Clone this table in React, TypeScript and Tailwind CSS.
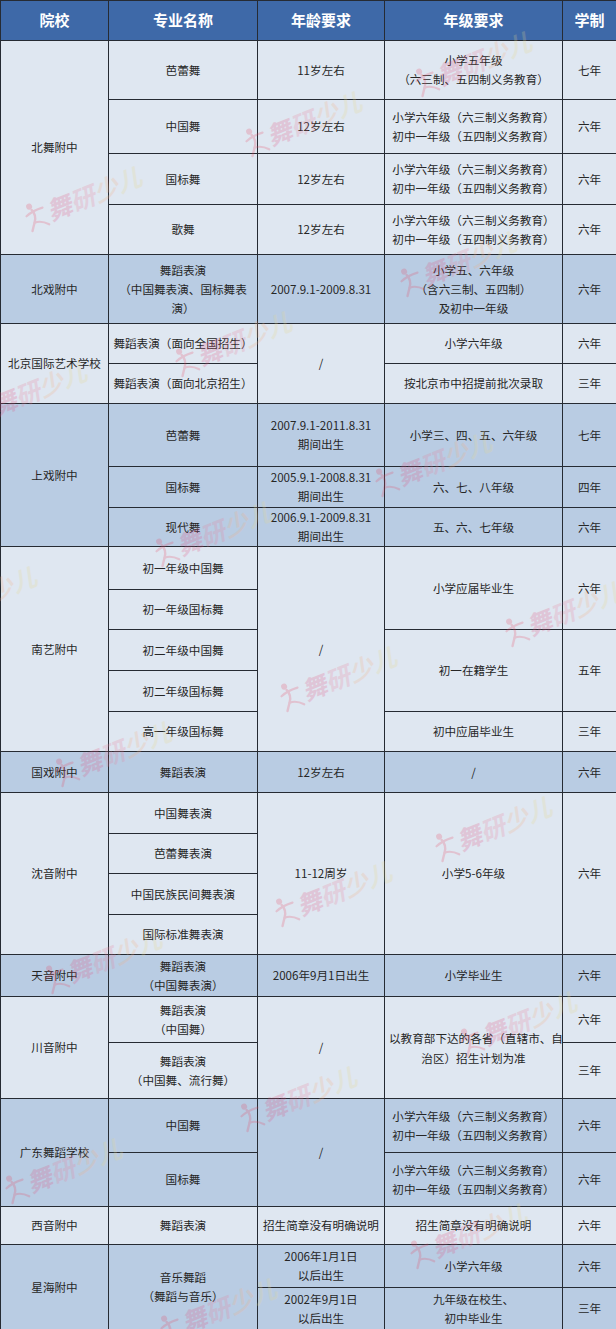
import type { ReactNode } from "react";

const LIGHT = "bg-[#dfe7f1]";
const DARK = "bg-[#b9cce3]";

function Td({
  children,
  rowSpan,
  dark,
}: {
  children?: ReactNode;
  rowSpan?: number;
  dark?: boolean;
}) {
  return (
    <td
      rowSpan={rowSpan}
      className={`border border-[#262b33] px-1 py-0 text-center align-middle leading-[19px] whitespace-nowrap ${dark ? DARK : LIGHT}`}
    >
      {children}
    </td>
  );
}

function Lines({ items }: { items: string[] }) {
  return (
    <>
      {items.map((t, i) => (
        <div key={i}>{t}</div>
      ))}
    </>
  );
}

// 水印
function Mark({ className }: { className: string }) {
  return (
    <div
      className={`pointer-events-none absolute flex items-end -rotate-[22deg] opacity-[0.22] select-none ${className}`}
    >
      <svg width="24" height="30" viewBox="0 0 24 30" className="mb-[-2px]">
        <circle cx="9" cy="4" r="3" fill="#e8445f" />
        <path d="M3 12 Q 11 9 21 10" stroke="#e8445f" strokeWidth="2.2" fill="none" strokeLinecap="round" />
        <path d="M10 8 Q 13 15 8 21 Q 5 25 3 28" stroke="#e8445f" strokeWidth="2.4" fill="none" strokeLinecap="round" />
        <path d="M8 21 Q 15 21 21 28" stroke="#e8445f" strokeWidth="2.2" fill="none" strokeLinecap="round" />
      </svg>
      <span className="text-[25px] leading-none font-bold italic text-[#e0507f]">舞</span>
      <span className="text-[25px] leading-none font-bold italic text-[#e87c98]">研</span>
      <span className="text-[25px] leading-none font-bold italic text-[#f4b184]">少</span>
      <span className="text-[25px] leading-none font-bold italic text-[#e6d88e]">儿</span>
    </div>
  );
}

const sixYear = ["小学六年级（六三制义务教育）", "初中一年级（五四制义务教育）"];

export default function App() {
  return (
    <div className="relative w-[616px] overflow-hidden bg-white font-['Noto_Sans_CJK_SC','Microsoft_YaHei',sans-serif] text-[11.6px] text-[#262626]">
      <table className="w-[616px] table-fixed border-collapse">
        <colgroup>
          <col className="w-[108px]" />
          <col className="w-[149px]" />
          <col className="w-[127px]" />
          <col className="w-[178px]" />
          <col className="w-[54px]" />
        </colgroup>
        <thead>
          <tr className="h-[40px] bg-[#3e69a8] text-[15px] font-bold text-white">
            <th className="border border-[#262b33]">院校</th>
            <th className="border border-[#262b33]">专业名称</th>
            <th className="border border-[#262b33]">年龄要求</th>
            <th className="border border-[#262b33]">年级要求</th>
            <th className="border border-[#262b33]">学制</th>
          </tr>
        </thead>
        <tbody>
          {/* 北舞附中 */}
          <tr className="h-[59px]">
            <Td rowSpan={4}>北舞附中</Td>
            <Td>芭蕾舞</Td>
            <Td>11岁左右</Td>
            <Td>
              <Lines items={["小学五年级", "（六三制、五四制义务教育）"]} />
            </Td>
            <Td>七年</Td>
          </tr>
          <tr className="h-[54px]">
            <Td>中国舞</Td>
            <Td>12岁左右</Td>
            <Td>
              <Lines items={sixYear} />
            </Td>
            <Td>六年</Td>
          </tr>
          <tr className="h-[51px]">
            <Td>国标舞</Td>
            <Td>12岁左右</Td>
            <Td>
              <Lines items={sixYear} />
            </Td>
            <Td>六年</Td>
          </tr>
          <tr className="h-[50px]">
            <Td>歌舞</Td>
            <Td>12岁左右</Td>
            <Td>
              <Lines items={sixYear} />
            </Td>
            <Td>六年</Td>
          </tr>

          {/* 北戏附中 */}
          <tr className="h-[69px]">
            <Td dark>北戏附中</Td>
            <Td dark>
              <Lines items={["舞蹈表演", "（中国舞表演、国标舞表", "演）"]} />
            </Td>
            <Td dark>2007.9.1-2009.8.31</Td>
            <Td dark>
              <Lines items={["小学五、六年级", "（含六三制、五四制）", "及初中一年级"]} />
            </Td>
            <Td dark>六年</Td>
          </tr>

          {/* 北京国际艺术学校 */}
          <tr className="h-[40px]">
            <Td rowSpan={2}>北京国际艺术学校</Td>
            <Td>舞蹈表演（面向全国招生）</Td>
            <Td rowSpan={2}>/</Td>
            <Td>小学六年级</Td>
            <Td>六年</Td>
          </tr>
          <tr className="h-[40px]">
            <Td>舞蹈表演（面向北京招生）</Td>
            <Td>按北京市中招提前批次录取</Td>
            <Td>三年</Td>
          </tr>

          {/* 上戏附中 */}
          <tr className="h-[63px]">
            <Td dark rowSpan={3}>上戏附中</Td>
            <Td dark>芭蕾舞</Td>
            <Td dark>
              <Lines items={["2007.9.1-2011.8.31", "期间出生"]} />
            </Td>
            <Td dark>小学三、四、五、六年级</Td>
            <Td dark>七年</Td>
          </tr>
          <tr className="h-[41px]">
            <Td dark>国标舞</Td>
            <Td dark>
              <Lines items={["2005.9.1-2008.8.31", "期间出生"]} />
            </Td>
            <Td dark>六、七、八年级</Td>
            <Td dark>四年</Td>
          </tr>
          <tr className="h-[39px]">
            <Td dark>现代舞</Td>
            <Td dark>
              <Lines items={["2006.9.1-2009.8.31", "期间出生"]} />
            </Td>
            <Td dark>五、六、七年级</Td>
            <Td dark>六年</Td>
          </tr>

          {/* 南艺附中 */}
          <tr className="h-[43px]">
            <Td rowSpan={5}>南艺附中</Td>
            <Td>初一年级中国舞</Td>
            <Td rowSpan={5}>/</Td>
            <Td rowSpan={2}>小学应届毕业生</Td>
            <Td rowSpan={2}>六年</Td>
          </tr>
          <tr className="h-[40px]">
            <Td>初一年级国标舞</Td>
          </tr>
          <tr className="h-[41px]">
            <Td>初二年级中国舞</Td>
            <Td rowSpan={2}>初一在籍学生</Td>
            <Td rowSpan={2}>五年</Td>
          </tr>
          <tr className="h-[41px]">
            <Td>初二年级国标舞</Td>
          </tr>
          <tr className="h-[40px]">
            <Td>高一年级国标舞</Td>
            <Td>初中应届毕业生</Td>
            <Td>三年</Td>
          </tr>

          {/* 国戏附中 */}
          <tr className="h-[41px]">
            <Td dark>国戏附中</Td>
            <Td dark>舞蹈表演</Td>
            <Td dark>12岁左右</Td>
            <Td dark>/</Td>
            <Td dark>六年</Td>
          </tr>

          {/* 沈音附中 */}
          <tr className="h-[41px]">
            <Td rowSpan={4}>沈音附中</Td>
            <Td>中国舞表演</Td>
            <Td rowSpan={4}>11-12周岁</Td>
            <Td rowSpan={4}>小学5-6年级</Td>
            <Td rowSpan={4}>六年</Td>
          </tr>
          <tr className="h-[40px]">
            <Td>芭蕾舞表演</Td>
          </tr>
          <tr className="h-[41px]">
            <Td>中国民族民间舞表演</Td>
          </tr>
          <tr className="h-[40px]">
            <Td>国际标准舞表演</Td>
          </tr>

          {/* 天音附中 */}
          <tr className="h-[42px]">
            <Td dark>天音附中</Td>
            <Td dark>
              <Lines items={["舞蹈表演", "（中国舞表演）"]} />
            </Td>
            <Td dark>2006年9月1日出生</Td>
            <Td dark>小学毕业生</Td>
            <Td dark>六年</Td>
          </tr>

          {/* 川音附中 */}
          <tr className="h-[46px]">
            <Td rowSpan={2}>川音附中</Td>
            <Td>
              <Lines items={["舞蹈表演", "（中国舞）"]} />
            </Td>
            <Td rowSpan={2}>/</Td>
            <Td rowSpan={2}>
              <div className="leading-[20px]">
                <Lines items={["以教育部下达的各省（直辖市、自", "治区）招生计划为准"]} />
              </div>
            </Td>
            <Td>六年</Td>
          </tr>
          <tr className="h-[56px]">
            <Td>
              <Lines items={["舞蹈表演", "（中国舞、流行舞）"]} />
            </Td>
            <Td>三年</Td>
          </tr>

          {/* 广东舞蹈学校 */}
          <tr className="h-[54px]">
            <Td dark rowSpan={2}>广东舞蹈学校</Td>
            <Td dark>中国舞</Td>
            <Td dark rowSpan={2}>/</Td>
            <Td dark>
              <Lines items={sixYear} />
            </Td>
            <Td dark>六年</Td>
          </tr>
          <tr className="h-[54px]">
            <Td dark>国标舞</Td>
            <Td dark>
              <Lines items={sixYear} />
            </Td>
            <Td dark>六年</Td>
          </tr>

          {/* 西音附中 */}
          <tr className="h-[38px]">
            <Td>西音附中</Td>
            <Td>舞蹈表演</Td>
            <Td>招生简章没有明确说明</Td>
            <Td>招生简章没有明确说明</Td>
            <Td>六年</Td>
          </tr>

          {/* 星海附中 */}
          <tr className="h-[43px]">
            <Td dark rowSpan={2}>星海附中</Td>
            <Td dark rowSpan={2}>
              <Lines items={["音乐舞蹈", "（舞蹈与音乐）"]} />
            </Td>
            <Td dark>
              <Lines items={["2006年1月1日", "以后出生"]} />
            </Td>
            <Td dark>小学六年级</Td>
            <Td dark>六年</Td>
          </tr>
          <tr className="h-[42px]">
            <Td dark>
              <Lines items={["2002年9月1日", "以后出生"]} />
            </Td>
            <Td dark>
              <Lines items={["九年级在校生、", "初中毕业生"]} />
            </Td>
            <Td dark>三年</Td>
          </tr>
        </tbody>
      </table>

      <Mark className="left-[410px] top-[47px]" />
      <Mark className="left-[240px] top-[107px]" />
      <Mark className="left-[20px] top-[182px]" />
      <Mark className="left-[395px] top-[247px]" />
      <Mark className="left-[170px] top-[327px]" />
      <Mark className="left-[-35px] top-[377px]" />
      <Mark className="left-[370px] top-[447px]" />
      <Mark className="left-[150px] top-[517px]" />
      <Mark className="left-[-85px] top-[582px]" />
      <Mark className="left-[500px] top-[597px]" />
      <Mark className="left-[275px] top-[662px]" />
      <Mark className="left-[50px] top-[737px]" />
      <Mark className="left-[430px] top-[812px]" />
      <Mark className="left-[270px] top-[877px]" />
      <Mark className="left-[40px] top-[944px]" />
      <Mark className="left-[455px] top-[1007px]" />
      <Mark className="left-[235px] top-[1082px]" />
      <Mark className="left-[0px] top-[1154px]" />
      <Mark className="left-[405px] top-[1219px]" />
      <Mark className="left-[155px] top-[1294px]" />
    </div>
  );
}
